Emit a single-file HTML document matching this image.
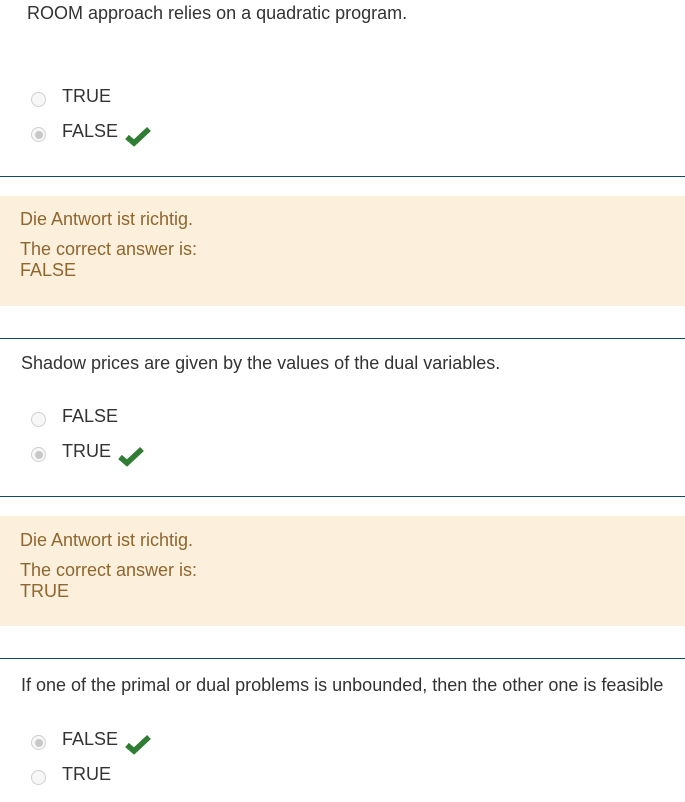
<!DOCTYPE html>
<html><head><meta charset="utf-8"><style>
body{margin:0;width:685px;height:802px;background:#fff;position:relative;font-family:"Liberation Sans",Arial,sans-serif;color:#333;overflow:hidden}
.t{position:absolute;font-size:18px;line-height:20px;white-space:nowrap}
.o{position:absolute;font-size:18px;line-height:20px;left:62px;white-space:nowrap}
.r{position:absolute;left:31px;width:15px;height:15px;border-radius:50%;border:1px solid #d0d0d0;background:#f7f7f7;box-sizing:border-box}
.r.c::after{content:"";position:absolute;left:2.5px;top:2.5px;width:8px;height:8px;border-radius:50%;background:#c8c8c8}
.hr{position:absolute;left:0;width:685px;height:1px;background:#0f4a63}
.fb{position:absolute;left:0;width:685px;background:#fcefdc;color:#8e662e}
.fb div{position:absolute;left:20px;font-size:18px;line-height:21px;white-space:nowrap}
svg.ck{position:absolute;width:28px;height:22px}
</style></head><body>
<div class="t" style="left:27px;top:3px">ROOM approach relies on a quadratic program.</div>
<div class="r" style="top:92px"></div><div class="o" style="top:86px">TRUE</div>
<div class="r c" style="top:127px"></div><div class="o" style="top:121px">FALSE</div>
<svg class="ck" style="left:124px;top:125px" viewBox="0 0 28 22"><path d="M3 12 L10 18 L25 4" fill="none" stroke="#2e7d32" stroke-width="5.5"/></svg>
<div class="hr" style="top:176px"></div>
<div class="fb" style="top:196px;height:110px"><div style="top:13px">Die Antwort ist richtig.</div><div style="top:43px">The correct answer is:<br>FALSE</div></div>
<div class="hr" style="top:338px"></div>
<div class="t" style="left:21px;top:353px">Shadow prices are given by the values of the dual variables.</div>
<div class="r" style="top:412px"></div><div class="o" style="top:406px">FALSE</div>
<div class="r c" style="top:447px"></div><div class="o" style="top:441px">TRUE</div>
<svg class="ck" style="left:117px;top:445px" viewBox="0 0 28 22"><path d="M3 12 L10 18 L25 4" fill="none" stroke="#2e7d32" stroke-width="5.5"/></svg>
<div class="hr" style="top:496px"></div>
<div class="fb" style="top:516px;height:110px"><div style="top:14px">Die Antwort ist richtig.</div><div style="top:44px">The correct answer is:<br>TRUE</div></div>
<div class="hr" style="top:658px"></div>
<div class="t" style="left:21px;top:675px">If one of the primal or dual problems is unbounded, then the other one is feasible</div>
<div class="r c" style="top:735px"></div><div class="o" style="top:729px">FALSE</div>
<svg class="ck" style="left:124px;top:733px" viewBox="0 0 28 22"><path d="M3 12 L10 18 L25 4" fill="none" stroke="#2e7d32" stroke-width="5.5"/></svg>
<div class="r" style="top:770px"></div><div class="o" style="top:764px">TRUE</div>
</body></html>
